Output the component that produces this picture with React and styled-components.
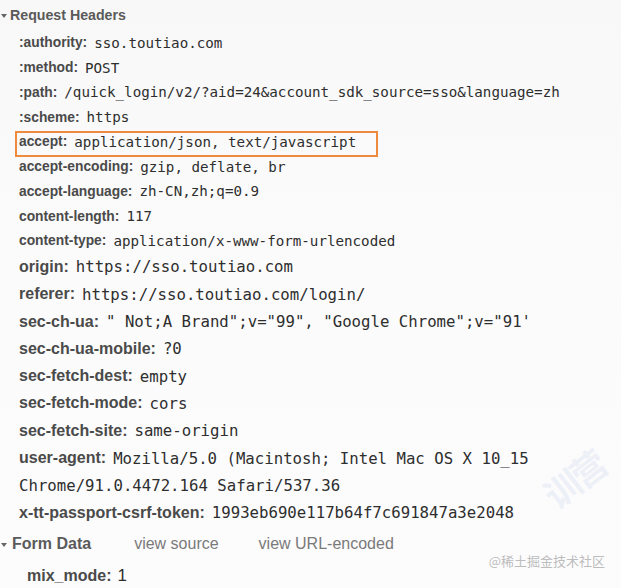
import styled, { createGlobalStyle } from "styled-components";

const GlobalStyle = createGlobalStyle`
  html, body {
    margin: 0;
    padding: 0;
    background: #fafafa;
  }
  body {
    font-family: "Liberation Sans", Arial, sans-serif;
  }
`;

const Page = styled.div`
  position: relative;
  width: 621px;
  height: 588px;
  overflow: hidden;
  background: linear-gradient(180deg, #f8f8f8 0%, #fbfbfb 45%, #fcfcfd 100%);
`;

const Section = styled.div`
  display: flex;
  align-items: center;
  height: ${(p) => p.$h}px;
  padding-left: 1px;
  color: #5a5a5a;
  font-weight: bold;
  font-size: ${(p) => p.$size}px;
`;

const Arrow = styled.span`
  display: inline-block;
  width: 0;
  height: 0;
  border-left: ${(p) => p.$w}px solid transparent;
  border-right: ${(p) => p.$w}px solid transparent;
  border-top: ${(p) => p.$w * 1.4}px solid #666;
  margin-right: ${(p) => p.$gap}px;
  margin-top: 1px;
`;

const Link = styled.span`
  font-weight: normal;
  color: #7a7a7a;
  margin-left: ${(p) => p.$ml}px;
`;

const Row = styled.div`
  position: relative;
  display: flex;
  align-items: center;
  height: ${(p) => p.$h}px;
  padding-left: ${(p) => p.$indent || 19}px;
  white-space: nowrap;

  ${(p) =>
    p.$boxed &&
    `
    &::after {
      content: "";
      position: absolute;
      left: 15px;
      top: 1.5px;
      width: 363px;
      height: 26px;
      box-sizing: border-box;
      border: 2px solid #ee8a3e;
    }
  `}
`;

const Name = styled.span`
  font-family: "Liberation Sans", Arial, sans-serif;
  font-weight: bold;
  color: #4a4a4a;
  font-size: ${(p) => p.$size}px;
  margin-right: ${(p) => p.$gap}px;
`;

const Value = styled.span`
  font-family: "DejaVu Sans Mono", Menlo, monospace;
  color: #2e2e2e;
  font-size: ${(p) => p.$size}px;
`;

const PlainValue = styled.span`
  font-family: "Liberation Sans", Arial, sans-serif;
  color: #2e2e2e;
  font-size: ${(p) => p.$size}px;
`;

const InputEdge = styled.div`
  margin-left: 16px;
  width: 408px;
  height: 10px;
  border: 1px solid #d8d8d8;
  border-radius: 4px;
  background: #fff;
`;

const Watermark = styled.div`
  position: absolute;
  right: 16px;
  top: 551px;
  font-family: "Noto Sans CJK SC", sans-serif;
  font-size: 13px;
  color: #bdbdbd;
`;

const FaintMark = styled.div`
  position: absolute;
  left: 536px;
  top: 484px;
  font-family: "Noto Sans CJK SC", sans-serif;
  font-weight: bold;
  font-size: 36px;
  line-height: 1;
  white-space: nowrap;
  color: rgba(190, 200, 232, 0.22);
  transform: rotate(-38deg);
  transform-origin: left top;
  letter-spacing: -3px;
`;

const top = [
  [":authority:", "sso.toutiao.com"],
  [":method:", "POST"],
  [":path:", "/quick_login/v2/?aid=24&account_sdk_source=sso&language=zh"],
  [":scheme:", "https"],
  ["accept:", "application/json, text/javascript", true],
  ["accept-encoding:", "gzip, deflate, br"],
  ["accept-language:", "zh-CN,zh;q=0.9"],
  ["content-length:", "117"],
  ["content-type:", "application/x-www-form-urlencoded"],
];

const bottom = [
  ["origin:", "https://sso.toutiao.com"],
  ["referer:", "https://sso.toutiao.com/login/"],
  ["sec-ch-ua:", "\" Not;A Brand\";v=\"99\", \"Google Chrome\";v=\"91'"],
  ["sec-ch-ua-mobile:", "?0"],
  ["sec-fetch-dest:", "empty"],
  ["sec-fetch-mode:", "cors"],
  ["sec-fetch-site:", "same-origin"],
  ["user-agent:", "Mozilla/5.0 (Macintosh; Intel Mac OS X 10_15"],
  [null, "Chrome/91.0.4472.164 Safari/537.36"],
  ["x-tt-passport-csrf-token:", "1993eb690e117b64f7c691847a3e2048"],
];

export default function App() {
  return (
    <Page>
      <GlobalStyle />
      <Section $h={30.6} $size={14.2}>
        <Arrow $w={3} $gap={3} />
        Request Headers
      </Section>

      {top.map(([k, v, boxed]) => (
        <Row key={k} $h={24.75} $boxed={boxed}>
          <Name $size={13.8} $gap={7}>{k}</Name>
          <Value $size={14.2}>{v}</Value>
        </Row>
      ))}

      {bottom.map(([k, v]) => (
        <Row key={v} $h={27.3}>
          {k && <Name $size={16} $gap={7}>{k}</Name>}
          <Value $size={15.7}>{v}</Value>
        </Row>
      ))}

      <Section $h={36} $size={16}>
        <Arrow $w={3.5} $gap={5} />
        Form Data
        <Link $ml={43}>view source</Link>
        <Link $ml={40}>view URL-encoded</Link>
      </Section>

      <Row $h={28} $indent={27}>
        <Name $size={16} $gap={6}>mix_mode:</Name>
        <PlainValue $size={17}>1</PlainValue>
      </Row>
      <InputEdge />

      <FaintMark>训营</FaintMark>
      <Watermark>@稀土掘金技术社区</Watermark>
    </Page>
  );
}
